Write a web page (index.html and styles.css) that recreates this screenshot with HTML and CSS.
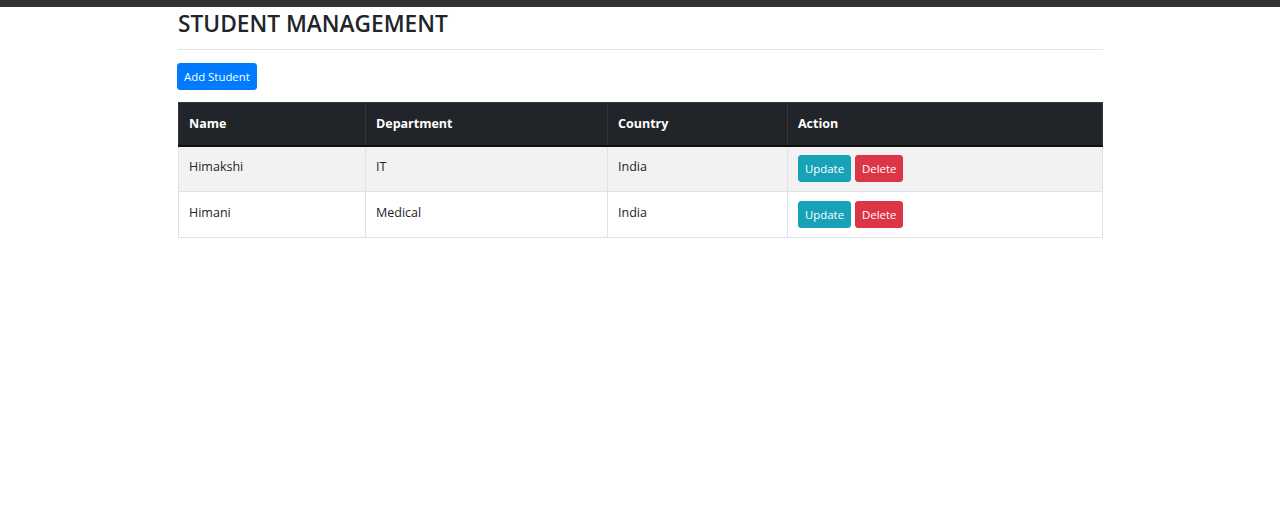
FILE: index.html
```html
<!DOCTYPE html>
<html>
<head>
<meta charset="utf-8">
<link rel="stylesheet" href="styles.css">
</head>
<body>
<div class="topbar"></div>
<div class="container">
  <h3 class="title">STUDENT MANAGEMENT</h3>
  <hr class="rule">
  <button class="btn btn-primary">Add Student</button>
  <table class="table">
    <thead>
      <tr>
        <th class="c1">Name</th>
        <th class="c2">Department</th>
        <th class="c3">Country</th>
        <th class="c4">Action</th>
      </tr>
    </thead>
    <tbody>
      <tr class="odd">
        <td>Himakshi</td>
        <td>IT</td>
        <td>India</td>
        <td class="actions"><button class="btn btn-info">Update</button><button class="btn btn-danger">Delete</button></td>
      </tr>
      <tr>
        <td>Himani</td>
        <td>Medical</td>
        <td>India</td>
        <td class="actions"><button class="btn btn-info">Update</button><button class="btn btn-danger">Delete</button></td>
      </tr>
    </tbody>
  </table>
</div>
</body>
</html>
```
FILE: styles.css
```css
html, body {
  margin: 0;
  padding: 0;
  background: #fff;
  font-family: "Open Sans", "Noto Sans", sans-serif;
  color: #212529;
}
.topbar {
  height: 7px;
  background: #333333;
}
.container {
  width: 925px;
  margin: 0 auto;
  padding-left: 1px;
}
.title {
  margin: 0;
  padding-top: 1px;
  font-size: 22.7px;
  font-weight: 600;
  line-height: 32px;
  color: #212529;
  letter-spacing: 0;
}
.rule {
  margin: 9px 0 13px 0;
  border: 0;
  border-top: 1px solid #e5e5e5;
}
.btn {
  display: inline-block;
  border: 1px solid transparent;
  border-radius: 3px;
  font-family: "Open Sans", "Noto Sans", sans-serif;
  font-size: 11.4px;
  line-height: 19px;
  padding: 3px 7px;
  color: #fff;
  cursor: pointer;
}
.btn-primary {
  background: #007bff;
  border-color: #007bff;
  margin-left: -1px;
  padding: 3px 6px;
}
.btn-info {
  background: #17a2b8;
  border-color: #17a2b8;
  padding: 3px 6px;
}
.btn-danger {
  background: #dc3545;
  border-color: #dc3545;
  margin-left: 4px;
  padding: 3px 6px;
}
.table {
  margin-top: 12px;
  width: 925px;
  border-collapse: collapse;
  font-size: 12.5px;
}
.table th {
  background: #212529;
  color: #fff;
  text-align: left;
  font-weight: 700;
  height: 43px;
  padding: 0 10px 1px 10px;
  border: 1px solid #32383e;
  border-bottom: 2px solid #111;
  box-sizing: border-box;
}
.c1 { width: 187px; }
.c2 { width: 242px; }
.c3 { width: 180px; }
.table td {
  height: 46px;
  padding: 0 10px 5px 10px;
  border: 1px solid #dee2e6;
  vertical-align: middle;
  box-sizing: border-box;
}
.table td.actions {
  padding: 0 10px;
}
.odd td {
  background: #f2f2f2;
}
```
